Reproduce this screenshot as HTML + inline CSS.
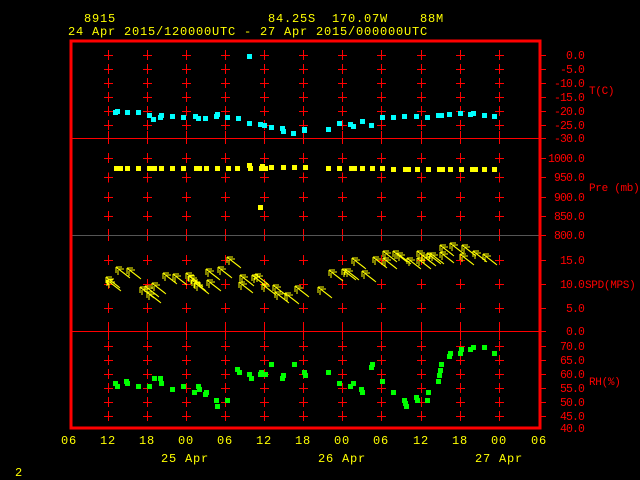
<!DOCTYPE html>
<html><head><meta charset="utf-8"><style>
html,body{margin:0;padding:0;background:#000;width:640px;height:480px;overflow:hidden}
svg{display:block;font-family:"Liberation Mono","DejaVu Sans Mono",monospace;font-size:12px;letter-spacing:0.8px}
.y{fill:#ff0}.r{fill:#f00}
.grid{shape-rendering:crispEdges}
.rl{font-size:11.5px;letter-spacing:-0.9px}
.rn{font-size:11px;letter-spacing:-0.3px}
</style></head><body>
<svg width="640" height="480" viewBox="0 0 640 480" xmlns="http://www.w3.org/2000/svg">
<rect width="640" height="480" fill="#000"/>
<!-- header -->
<text class="y" x="84" y="22">8915</text>
<text class="y" x="268" y="22" xml:space="preserve">84.25S  170.07W    88M</text>
<text class="y" x="68" y="35">24 Apr 2015/120000UTC - 27 Apr 2015/000000UTC</text>

<g class="grid" stroke="#f00" stroke-width="1" fill="none">
<path d="M108.5 50V131M147.5 50V131M186.5 50V131M225.5 50V131M264.5 50V131M303.5 50V131M342.5 50V131M381.5 50V131M421.5 50V131M460.5 50V131M499.5 50V131" stroke-dasharray="10 4"/>
<path d="M108.5 153V222M147.5 153V222M186.5 153V222M225.5 153V222M264.5 153V222M303.5 153V222M342.5 153V222M381.5 153V222M421.5 153V222M460.5 153V222M499.5 153V222" stroke-dasharray="10 9.4"/>
<path d="M108.5 255V314M147.5 255V314M186.5 255V314M225.5 255V314M264.5 255V314M303.5 255V314M342.5 255V314M381.5 255V314M421.5 255V314M460.5 255V314M499.5 255V314" stroke-dasharray="10 14"/>
<path d="M108.5 341V422M147.5 341V422M186.5 341V422M225.5 341V422M264.5 341V422M303.5 341V422M342.5 341V422M381.5 341V422M421.5 341V422M460.5 341V422M499.5 341V422" stroke-dasharray="10 4"/>
<path d="M108.5 131V138M147.5 131V138M186.5 131V138M225.5 131V138M264.5 131V138M303.5 131V138M342.5 131V138M381.5 131V138M421.5 131V138M460.5 131V138M499.5 131V138"/>
<path d="M108.5 138V144M147.5 138V144M186.5 138V144M225.5 138V144M264.5 138V144M303.5 138V144M342.5 138V144M381.5 138V144M421.5 138V144M460.5 138V144M499.5 138V144"/>
<path d="M108.5 229V241M147.5 229V241M186.5 229V241M225.5 229V241M264.5 229V241M303.5 229V241M342.5 229V241M381.5 229V241M421.5 229V241M460.5 229V241M499.5 229V241"/>
<path d="M108.5 322V340M147.5 322V340M186.5 322V340M225.5 322V340M264.5 322V340M303.5 322V340M342.5 322V340M381.5 322V340M421.5 322V340M460.5 322V340M499.5 322V340"/>
<g id="hb">
<path d="M104 55.5h9M104 69.5h9M104 83.5h9M104 97.5h9M104 111.5h9M104 125.5h9M104 158.5h9M104 177.5h9M104 197.5h9M104 216.5h9M104 260.5h9M104 284.5h9M104 308.5h9M104 346.5h9M104 360.5h9M104 374.5h9M104 388.5h9M104 402.5h9M104 416.5h9"/>
</g>
<use href="#hb" x="39"/><use href="#hb" x="78"/><use href="#hb" x="117"/><use href="#hb" x="156"/><use href="#hb" x="195"/><use href="#hb" x="234"/><use href="#hb" x="273"/><use href="#hb" x="313"/><use href="#hb" x="352"/><use href="#hb" x="391"/>
<path d="M540 55.5H546M540 69.5H546M540 83.5H546M540 97.5H546M540 111.5H546M540 125.5H546M540 138.5H546M540 158.5H546M540 177.5H546M540 197.5H546M540 216.5H546M540 235.5H546M540 260.5H546M540 284.5H546M540 308.5H546M540 331.5H546M540 346.5H546M540 360.5H546M540 374.5H546M540 388.5H546M540 402.5H546M540 416.5H546"/>
<path d="M70 138.5H540M70 331.5H540"/>
</g>
<path class="grid" d="M70 235.5H540" stroke="#555" stroke-width="1"/>
<!-- frame -->
<rect class="grid" x="71" y="41" width="469" height="387" fill="none" stroke="#f00" stroke-width="3"/>

<!-- right labels -->
<g class="r rl" text-anchor="end">
<text x="584" y="59">0.0</text><text x="584" y="73">-5.0</text><text x="584" y="87">-10.0</text><text x="584" y="101">-15.0</text><text x="584" y="115">-20.0</text><text x="584" y="129">-25.0</text><text x="584" y="142">-30.0</text>
<text x="584" y="162">1000.0</text><text x="584" y="181">950.0</text><text x="584" y="201">900.0</text><text x="584" y="220">850.0</text><text x="584" y="239">800.0</text>
<text x="584" y="264">15.0</text><text x="584" y="288">10.0</text><text x="584" y="312">5.0</text><text x="584" y="335">0.0</text>
<text x="584" y="350">70.0</text><text x="584" y="364">65.0</text><text x="584" y="378">60.0</text><text x="584" y="392">55.0</text><text x="584" y="406">50.0</text><text x="584" y="420">45.0</text><text x="584" y="432">40.0</text>
</g>
<g class="r rn">
<text x="589" y="94">T(C)</text>
<text x="589" y="191" xml:space="preserve">Pre (mb)</text>
<text x="585" y="288">SPD(MPS)</text>
<text x="589" y="385">RH(%)</text>
</g>

<!-- bottom labels -->
<g class="y" text-anchor="middle">
<text x="69" y="444">06</text><text x="108" y="444">12</text><text x="147" y="444">18</text><text x="186" y="444">00</text><text x="225" y="444">06</text><text x="264" y="444">12</text><text x="303" y="444">18</text><text x="342" y="444">00</text><text x="381" y="444">06</text><text x="421" y="444">12</text><text x="460" y="444">18</text><text x="499" y="444">00</text><text x="539" y="444">06</text>
<text x="185" y="462">25 Apr</text><text x="342" y="462">26 Apr</text><text x="499" y="462">27 Apr</text>
</g>
<text class="y" x="15" y="476">2</text>

<!-- T data -->
<g fill="#0ff">
<rect x="247" y="54" width="5" height="5"/>
<rect x="113" y="110" width="5" height="5"/><rect x="115" y="109" width="5" height="5"/><rect x="125" y="110" width="5" height="5"/><rect x="136" y="110" width="5" height="5"/><rect x="147" y="113" width="5" height="5"/><rect x="151" y="117" width="5" height="5"/><rect x="158" y="115" width="5" height="5"/><rect x="159" y="113" width="5" height="5"/><rect x="170" y="114" width="5" height="5"/><rect x="181" y="115" width="5" height="5"/><rect x="193" y="114" width="5" height="5"/><rect x="196" y="116" width="5" height="5"/><rect x="203" y="116" width="5" height="5"/><rect x="214" y="114" width="5" height="5"/><rect x="215" y="112" width="5" height="5"/><rect x="225" y="115" width="5" height="5"/><rect x="236" y="116" width="5" height="5"/><rect x="247" y="121" width="5" height="5"/><rect x="258" y="122" width="5" height="5"/><rect x="262" y="123" width="5" height="5"/><rect x="269" y="125" width="5" height="5"/><rect x="280" y="126" width="5" height="5"/><rect x="281" y="129" width="5" height="5"/><rect x="291" y="131" width="5" height="5"/><rect x="302" y="127" width="5" height="5"/><rect x="302" y="128" width="5" height="5"/><rect x="326" y="127" width="5" height="5"/><rect x="337" y="121" width="5" height="5"/><rect x="348" y="122" width="5" height="5"/><rect x="351" y="124" width="5" height="5"/><rect x="360" y="119" width="5" height="5"/><rect x="369" y="123" width="5" height="5"/><rect x="380" y="115" width="5" height="5"/><rect x="391" y="115" width="5" height="5"/><rect x="402" y="114" width="5" height="5"/><rect x="414" y="114" width="5" height="5"/><rect x="425" y="115" width="5" height="5"/><rect x="436" y="113" width="5" height="5"/><rect x="439" y="113" width="5" height="5"/><rect x="447" y="112" width="5" height="5"/><rect x="458" y="111" width="5" height="5"/><rect x="468" y="112" width="5" height="5"/><rect x="471" y="111" width="5" height="5"/><rect x="482" y="113" width="5" height="5"/><rect x="492" y="114" width="5" height="5"/>
</g>
<!-- Pre data -->
<g fill="#ff0">
<rect x="258" y="205" width="5" height="5"/>
<rect x="114" y="166" width="5" height="5"/><rect x="118" y="166" width="5" height="5"/><rect x="125" y="166" width="5" height="5"/><rect x="136" y="166" width="5" height="5"/><rect x="147" y="166" width="5" height="5"/><rect x="152" y="166" width="5" height="5"/><rect x="159" y="166" width="5" height="5"/><rect x="170" y="166" width="5" height="5"/><rect x="181" y="166" width="5" height="5"/><rect x="194" y="166" width="5" height="5"/><rect x="197" y="166" width="5" height="5"/><rect x="204" y="166" width="5" height="5"/><rect x="215" y="166" width="5" height="5"/><rect x="226" y="166" width="5" height="5"/><rect x="235" y="166" width="5" height="5"/><rect x="247" y="163" width="5" height="5"/><rect x="248" y="166" width="5" height="5"/><rect x="259" y="166" width="5" height="5"/><rect x="260" y="164" width="5" height="5"/><rect x="263" y="166" width="5" height="5"/><rect x="269" y="165" width="5" height="5"/><rect x="281" y="165" width="5" height="5"/><rect x="292" y="165" width="5" height="5"/><rect x="303" y="165" width="5" height="5"/><rect x="326" y="166" width="5" height="5"/><rect x="337" y="166" width="5" height="5"/><rect x="349" y="166" width="5" height="5"/><rect x="352" y="166" width="5" height="5"/><rect x="360" y="166" width="5" height="5"/><rect x="370" y="166" width="5" height="5"/><rect x="380" y="166" width="5" height="5"/><rect x="391" y="167" width="5" height="5"/><rect x="403" y="167" width="5" height="5"/><rect x="406" y="167" width="5" height="5"/><rect x="415" y="167" width="5" height="5"/><rect x="426" y="167" width="5" height="5"/><rect x="437" y="167" width="5" height="5"/><rect x="440" y="167" width="5" height="5"/><rect x="448" y="167" width="5" height="5"/><rect x="459" y="167" width="5" height="5"/><rect x="470" y="167" width="5" height="5"/><rect x="473" y="167" width="5" height="5"/><rect x="482" y="167" width="5" height="5"/><rect x="492" y="167" width="5" height="5"/>
</g>
<!-- wind arrows -->
<defs><path id="a" d="M0 0L13 10M1 1L14 11M0 0H6M0 0V6M3 2H8M2 3V8"/></defs>
<g stroke="#ff0" stroke-width="1" fill="none">
<use href="#a" x="106" y="277"/><use href="#a" x="107" y="280"/><use href="#a" x="116" y="267"/><use href="#a" x="127" y="268"/><use href="#a" x="140" y="287"/><use href="#a" x="147" y="292"/><use href="#a" x="145" y="286"/><use href="#a" x="152" y="283"/><use href="#a" x="163" y="273"/><use href="#a" x="173" y="274"/><use href="#a" x="186" y="273"/><use href="#a" x="189" y="276"/><use href="#a" x="192" y="280"/><use href="#a" x="195" y="283"/><use href="#a" x="207" y="280"/><use href="#a" x="206" y="269"/><use href="#a" x="218" y="267"/><use href="#a" x="227" y="257"/><use href="#a" x="240" y="275"/><use href="#a" x="239" y="282"/><use href="#a" x="252" y="275"/><use href="#a" x="255" y="274"/><use href="#a" x="262" y="284"/><use href="#a" x="273" y="285"/><use href="#a" x="275" y="292"/><use href="#a" x="285" y="293"/><use href="#a" x="295" y="286"/><use href="#a" x="318" y="287"/><use href="#a" x="329" y="270"/><use href="#a" x="342" y="269"/><use href="#a" x="345" y="269"/><use href="#a" x="352" y="258"/><use href="#a" x="362" y="271"/><use href="#a" x="373" y="257"/><use href="#a" x="383" y="251"/><use href="#a" x="383" y="258"/><use href="#a" x="393" y="251"/><use href="#a" x="397" y="253"/><use href="#a" x="407" y="258"/><use href="#a" x="417" y="251"/><use href="#a" x="417" y="258"/><use href="#a" x="422" y="255"/><use href="#a" x="427" y="253"/><use href="#a" x="430" y="253"/><use href="#a" x="440" y="245"/><use href="#a" x="440" y="252"/><use href="#a" x="450" y="243"/><use href="#a" x="462" y="245"/><use href="#a" x="460" y="254"/><use href="#a" x="473" y="251"/><use href="#a" x="483" y="254"/>
</g>
<!-- RH data -->
<g fill="#0f0">
<rect x="113" y="381" width="5" height="5"/><rect x="115" y="384" width="5" height="5"/><rect x="124" y="379" width="5" height="5"/><rect x="125" y="381" width="5" height="5"/><rect x="136" y="384" width="5" height="5"/><rect x="147" y="384" width="5" height="5"/><rect x="152" y="376" width="5" height="5"/><rect x="158" y="376" width="5" height="5"/><rect x="159" y="381" width="5" height="5"/><rect x="170" y="387" width="5" height="5"/><rect x="181" y="384" width="5" height="5"/><rect x="192" y="390" width="5" height="5"/><rect x="196" y="384" width="5" height="5"/><rect x="197" y="387" width="5" height="5"/><rect x="203" y="392" width="5" height="5"/><rect x="204" y="390" width="5" height="5"/><rect x="214" y="398" width="5" height="5"/><rect x="215" y="404" width="5" height="5"/><rect x="225" y="398" width="5" height="5"/><rect x="235" y="367" width="5" height="5"/><rect x="237" y="370" width="5" height="5"/><rect x="247" y="372" width="5" height="5"/><rect x="249" y="376" width="5" height="5"/><rect x="258" y="372" width="5" height="5"/><rect x="259" y="370" width="5" height="5"/><rect x="263" y="372" width="5" height="5"/><rect x="269" y="362" width="5" height="5"/><rect x="280" y="376" width="5" height="5"/><rect x="281" y="373" width="5" height="5"/><rect x="292" y="362" width="5" height="5"/><rect x="302" y="370" width="5" height="5"/><rect x="303" y="373" width="5" height="5"/><rect x="326" y="370" width="5" height="5"/><rect x="337" y="381" width="5" height="5"/><rect x="348" y="384" width="5" height="5"/><rect x="351" y="381" width="5" height="5"/><rect x="359" y="387" width="5" height="5"/><rect x="360" y="390" width="5" height="5"/><rect x="369" y="365" width="5" height="5"/><rect x="370" y="362" width="5" height="5"/><rect x="380" y="379" width="5" height="5"/><rect x="391" y="390" width="5" height="5"/><rect x="402" y="398" width="5" height="5"/><rect x="403" y="401" width="5" height="5"/><rect x="404" y="404" width="5" height="5"/><rect x="414" y="395" width="5" height="5"/><rect x="415" y="398" width="5" height="5"/><rect x="425" y="398" width="5" height="5"/><rect x="426" y="390" width="5" height="5"/><rect x="436" y="379" width="5" height="5"/><rect x="437" y="373" width="5" height="5"/><rect x="438" y="368" width="5" height="5"/><rect x="439" y="362" width="5" height="5"/><rect x="447" y="354" width="5" height="5"/><rect x="448" y="351" width="5" height="5"/><rect x="458" y="351" width="5" height="5"/><rect x="459" y="347" width="5" height="5"/><rect x="468" y="347" width="5" height="5"/><rect x="471" y="345" width="5" height="5"/><rect x="482" y="345" width="5" height="5"/><rect x="492" y="351" width="5" height="5"/>
</g>
</svg>
</body></html>
